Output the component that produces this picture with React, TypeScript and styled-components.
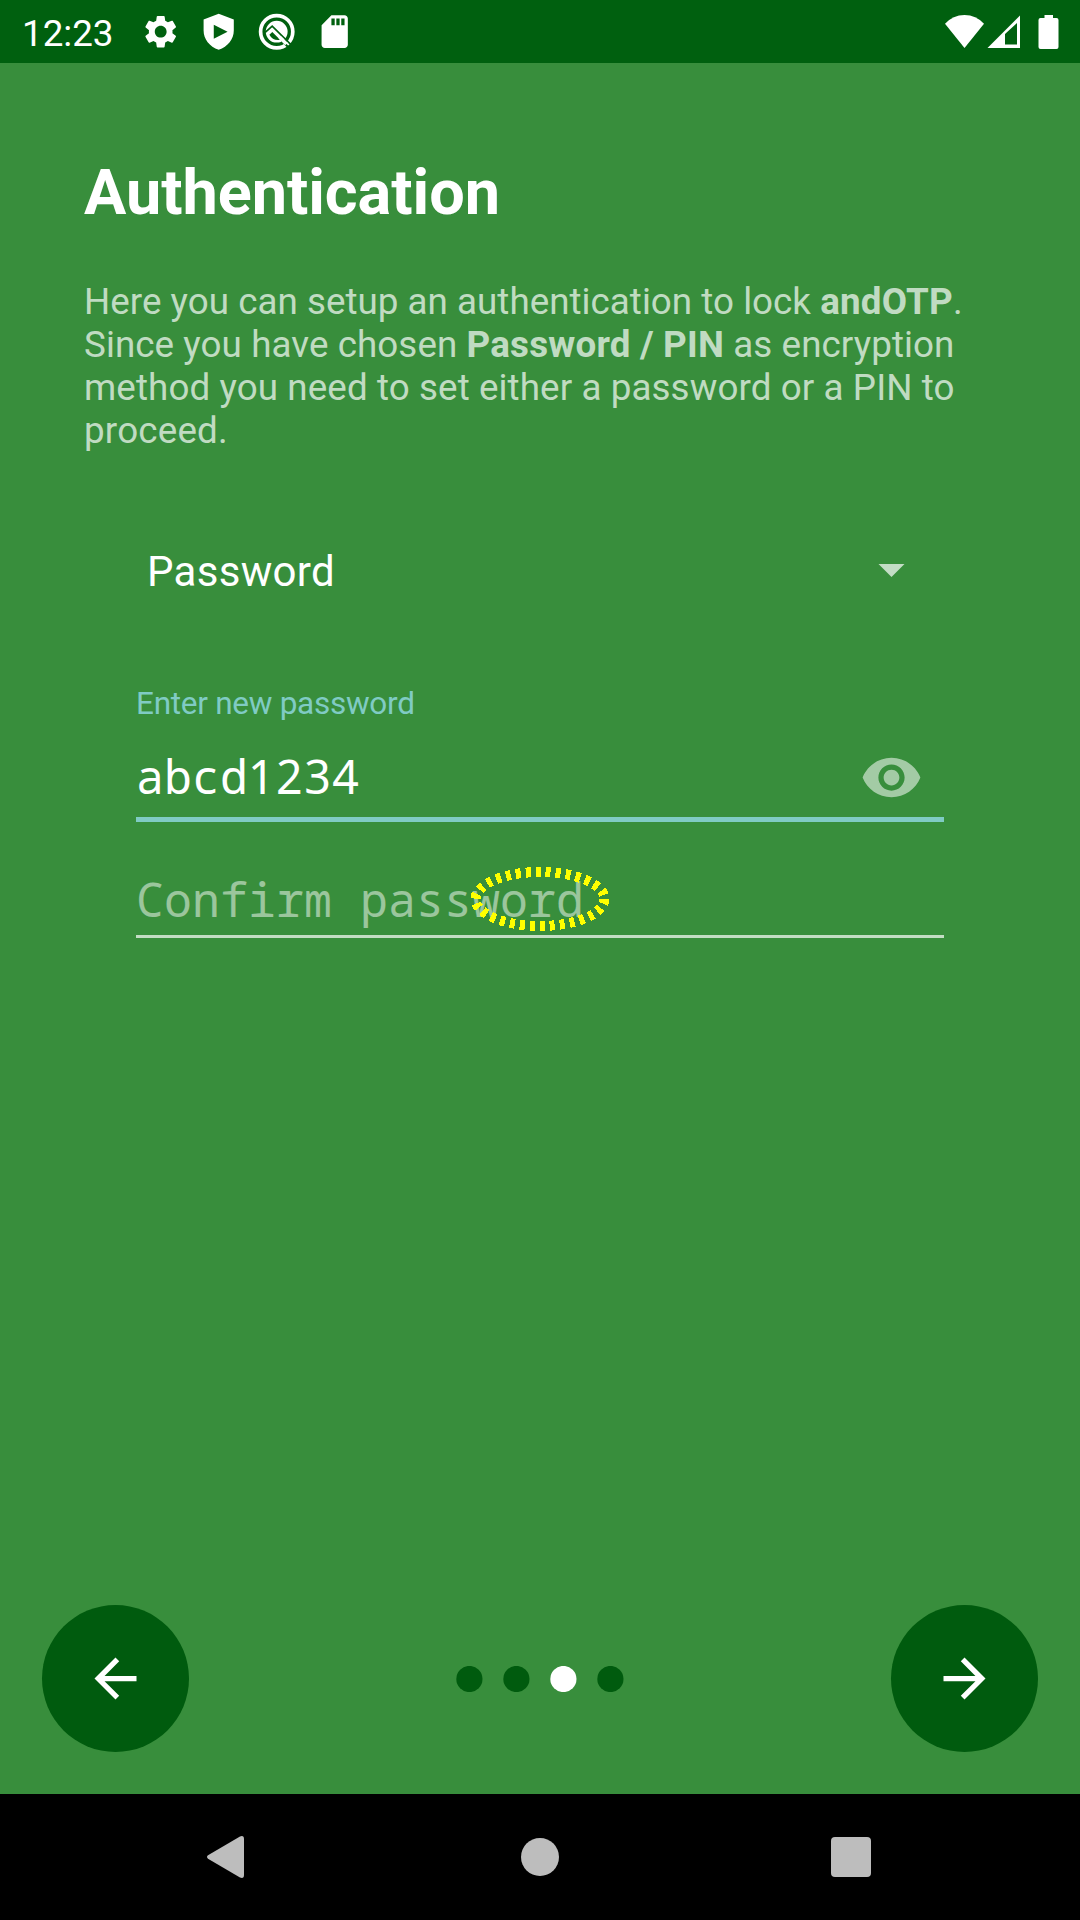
import React from "react";
import styled, { createGlobalStyle } from "styled-components";

const GlobalStyle = createGlobalStyle`
  * { box-sizing: border-box; }
  html, body { margin: 0; padding: 0; background: #388e3c; }
`;

const Screen = styled.div`
  display: flex;
  flex-direction: column;
  width: 1080px;
  height: 1920px;
  overflow: hidden;
  background: #388e3c;
  color: #fff;
  font-family: Roboto, sans-serif;
`;

const StatusBar = styled.header`
  display: flex;
  align-items: center;
  justify-content: space-between;
  height: 63px;
  flex: none;
  padding: 0 21px 0 22px;
  background: #00600f;
`;

const StatusGroup = styled.div<{ $gap: number }>`
  display: flex;
  align-items: center;
  gap: ${(p) => p.$gap}px;
`;

const Clock = styled.time`
  width: 119px;
  padding-top: 3px;
  font-size: 36.75px;
  line-height: 43px;
  white-space: nowrap;
`;

const Glyph = styled.svg<{ $w: number; $h: number }>`
  display: block;
  flex: none;
  width: ${(p) => p.$w}px;
  height: ${(p) => p.$h}px;
  fill: currentColor;
`;

const Page = styled.main`
  display: flex;
  flex-direction: column;
  flex: 1;
  padding: 93px 42px 42px;
`;

const Title = styled.h1`
  margin: 0 42px;
  font-size: 63px;
  line-height: 74px;
  font-weight: 700;
  letter-spacing: -0.05px;
`;

const Description = styled.p`
  margin: 50px 42px 0;
  font-size: 36.75px;
  line-height: 43px;
  color: rgba(255, 255, 255, 0.7);
  white-space: nowrap;
`;

const Line = styled.span<{ $tracking: number }>`
  letter-spacing: ${(p) => p.$tracking}px;
`;

const Strong = styled.b`
  letter-spacing: 0.2px;
`;

const Form = styled.section`
  display: flex;
  flex-direction: column;
  margin: 88px 94px 0;
`;

const Select = styled.div`
  display: flex;
  align-items: center;
  justify-content: space-between;
  height: 63px;
  padding: 0 39px 0 11px;
  font-size: 42px;
  line-height: 50px;
  letter-spacing: 0.3px;
`;

const Caret = styled(Glyph)`
  margin-bottom: 2px;
  color: rgba(255, 255, 255, 0.7);
`;

const Label = styled.label`
  margin-top: 82px;
  font-size: 31.5px;
  line-height: 37px;
  letter-spacing: -0.27px;
  color: #80cbc4;
`;

const Field = styled.div<{ $focused?: boolean }>`
  position: relative;
  display: flex;
  align-items: center;
  justify-content: space-between;
  height: ${(p) => (p.$focused ? 100 : 116)}px;
  padding: ${(p) => (p.$focused ? "24px 21px 8px 0" : "50px 0 8px")};
  border-bottom: ${(p) => (p.$focused ? "5px solid #80cbc4" : "3px solid #c3ddc4")};
  font-family: "Droid Sans Mono", "Noto Sans Mono", "DejaVu Sans Mono", monospace;
  font-size: 46.5px;
  line-height: 55px;
  letter-spacing: 0.1px;
`;

const Value = styled.span`
  padding-bottom: 2px;
  white-space: nowrap;
`;

const Digits = styled.span`
  font-family: "Noto Sans", sans-serif;
  letter-spacing: 1.5px;
`;

const Hint = styled.span`
  color: rgba(255, 255, 255, 0.5);
  white-space: nowrap;
`;

const Eye = styled(Glyph)`
  color: rgba(255, 255, 255, 0.54);
`;

const FocusRing = styled.svg`
  position: absolute;
  left: 333px;
  top: 44px;
  width: 142px;
  height: 68px;
  fill: none;
  stroke: #ff0;
  stroke-width: 10;
  stroke-dasharray: 5 5;
  shape-rendering: crispEdges;
`;

const Pager = styled.footer`
  display: flex;
  align-items: center;
  justify-content: space-between;
  margin-top: auto;
`;

const RoundButton = styled.button`
  display: flex;
  align-items: center;
  justify-content: center;
  width: 147px;
  height: 147px;
  padding: 0;
  border: 0;
  border-radius: 50%;
  background: #005b0e;
  color: #fff;
`;

const Dots = styled.svg`
  display: block;
  width: 168px;
  height: 26px;
`;

const NavBar = styled.nav`
  display: grid;
  grid-template-columns: 42px 38px 40px;
  column-gap: 272px;
  align-items: center;
  justify-content: start;
  height: 126px;
  flex: none;
  padding-left: 207px;
  background: #000;
  color: #bdbdbd;
`;

const steps = [false, false, true, false];

export default function App() {
  return (
    <Screen>
      <GlobalStyle />
      <StatusBar>
        <StatusGroup $gap={0}>
          <Clock>12:23</Clock>
          <StatusGroup $gap={18.6}>
            <Glyph $w={39.4} $h={39.4} viewBox="0 0 24 24">
              <path d="M19.14 12.94c.04-.3.06-.61.06-.94 0-.32-.02-.64-.07-.94l2.03-1.58c.18-.14.23-.41.12-.61l-1.92-3.32c-.12-.22-.37-.29-.59-.22l-2.39.96c-.5-.38-1.03-.7-1.62-.94L14.4 2.81c-.04-.24-.24-.41-.48-.41h-3.84c-.24 0-.43.17-.47.41L9.25 5.35c-.59.24-1.13.57-1.62.94l-2.39-.96c-.22-.08-.47 0-.59.22L2.74 8.87c-.12.21-.08.47.12.61l2.03 1.58c-.05.3-.09.63-.09.94s.02.64.07.94l-2.03 1.58c-.18.14-.23.41-.12.61l1.92 3.32c.12.22.37.29.59.22l2.39-.96c.5.38 1.03.7 1.62.94l.36 2.54c.05.24.24.41.48.41h3.84c.24 0 .44-.17.47-.41l.36-2.54c.59-.24 1.13-.56 1.62-.94l2.39.96c.22.08.47 0 .59-.22l1.92-3.32c.12-.22.07-.47-.12-.61l-2.01-1.58zM12 15.6c-1.98 0-3.6-1.62-3.6-3.6s1.62-3.6 3.6-3.6 3.6 1.62 3.6 3.6-1.62 3.6-3.6 3.6z" />
            </Glyph>
            <Glyph $w={39.4} $h={39.4} viewBox="0 0 24 24">
              <path fillRule="evenodd" d="M12 1l9.2 3.5v6.8c0 5.2-3.6 9.9-9.2 11.7-5.6-1.8-9.2-6.5-9.2-11.7V4.5L12 1zM9 7.700v8.600L17.400 12z" />
            </Glyph>
            <Glyph $w={39.4} $h={39.4} viewBox="-19.7 -19.7 39.4 39.4">
              <circle r="16.1" fill="none" stroke="currentColor" strokeWidth="3.7" />
              <circle r="10.9" />
              <path d="M-11.5 .8L-4.5 -5.6L14 12.6" fill="none" stroke="#00600f" strokeWidth="1.7" />
              <path d="M-7.3 3L-4.4 .2L3.6 8.2Q-4 9.4 -7.3 3z" fill="#00600f" />
              <path d="M5 8.5L12.5 16.500" fill="none" stroke="#00600f" strokeWidth="2" />
              <path d="M3 5.5L9.8 12.3" fill="none" stroke="currentColor" strokeWidth="3.4" />
            </Glyph>
            <Glyph $w={39.4} $h={39.4} viewBox="0 0 24 24">
              <path d="M18 2h-8L4.020 8 4 20c0 1.100.9 2 2 2h12c1.100 0 2-.9 2-2V4c0-1.100-.9-2-2-2zm-6 6h-2V4h2v4zm3 0h-2V4h2v4zm3 0h-2V4h2v4z" />
            </Glyph>
          </StatusGroup>
        </StatusGroup>
        <StatusGroup $gap={0}>
          <Glyph $w={39} $h={33} viewBox="0 0 39 33">
            <path d="M0 8.800Q8 0 19.500 0T39 8.800L19.500 33z" />
          </Glyph>
          <Glyph $w={54} $h={34} viewBox="-3.5 0 54 34">
            <path fillRule="evenodd" d="M0 33L32.500 .5V33zM17.500 29.500H29.500V8L17.500 19z" />
          </Glyph>
          <Glyph $w={21} $h={34} viewBox="0 0 21 34">
            <path d="M6.500 0h8.500v3h3.500a2 2 0 0 1 2 2v27a2 2 0 0 1-2 2H2.500a2 2 0 0 1-2-2V5a2 2 0 0 1 2-2h4z" />
          </Glyph>
        </StatusGroup>
      </StatusBar>

      <Page>
        <Title>Authentication</Title>
        <Description>
          <Line $tracking={0.03}>Here you can setup an authentication to lock <Strong>andOTP</Strong>.</Line><br />
          <Line $tracking={0.08}>Since you have chosen <Strong>Password / PIN</Strong> as encryption</Line><br />
          <Line $tracking={0.1}>method you need to set either a password or a PIN to</Line><br />
          <Line $tracking={0.2}>proceed.</Line>
        </Description>
        <Form>
          <Select>
            Password
            <Caret $w={27} $h={13} viewBox="0 0 27 13">
              <path d="M.5 0h26L13.500 13z" />
            </Caret>
          </Select>
          <Label>Enter new password</Label>
          <Field $focused>
            <Value>abcd<Digits>1234</Digits></Value>
            <Eye $w={63} $h={63} viewBox="0 0 24 24">
              <path d="M12 4.500C7 4.500 2.730 7.610 1 12c1.730 4.390 6 7.500 11 7.500s9.270-3.110 11-7.500c-1.730-4.390-6-7.500-11-7.500zM12 17c-2.760 0-5-2.240-5-5s2.240-5 5-5 5 2.240 5 5-2.240 5-5 5zm0-8c-1.660 0-3 1.340-3 3s1.340 3 3 3 3-1.340 3-3-1.340-3-3-3z" />
            </Eye>
          </Field>
          <Field>
            <Hint>Confirm password</Hint>
            <FocusRing viewBox="0 0 142 68">
              <ellipse cx="71" cy="33" rx="64.5" ry="27" />
            </FocusRing>
          </Field>
        </Form>
        <Pager>
          <RoundButton aria-label="Back">
            <Glyph $w={63} $h={63} viewBox="0 0 24 24">
              <path d="M20 11H7.830l5.590-5.590L12 4l-8 8 8 8 1.410-1.410L7.830 13H20v-2z" />
            </Glyph>
          </RoundButton>
          <Dots viewBox="0 0 168 26">
            {steps.map((active, i) => (
              <circle key={i} cx={13.4 + i * 47} cy="13" r="13.1" fill={active ? "#fff" : "#005b0e"} />
            ))}
          </Dots>
          <RoundButton aria-label="Next">
            <Glyph $w={63} $h={63} viewBox="0 0 24 24">
              <path d="M12 4l-1.410 1.410L16.170 11H4v2h12.170l-5.580 5.590L12 20l8-8z" />
            </Glyph>
          </RoundButton>
        </Pager>
      </Page>

      <NavBar>
        <Glyph $w={37} $h={42} viewBox="0 0 37 42">
          <path d="M1 19.300L33 .4Q37 -1 37 3V39Q37 43 33 41.600L1 22.700Q-1 21 1 19.300z" />
        </Glyph>
        <Glyph $w={38} $h={38} viewBox="0 0 38 38">
          <circle cx="19" cy="19" r="19" />
        </Glyph>
        <Glyph $w={40} $h={40} viewBox="0 0 40 40">
          <rect width="40" height="40" rx="4" />
        </Glyph>
      </NavBar>
    </Screen>
  );
}
